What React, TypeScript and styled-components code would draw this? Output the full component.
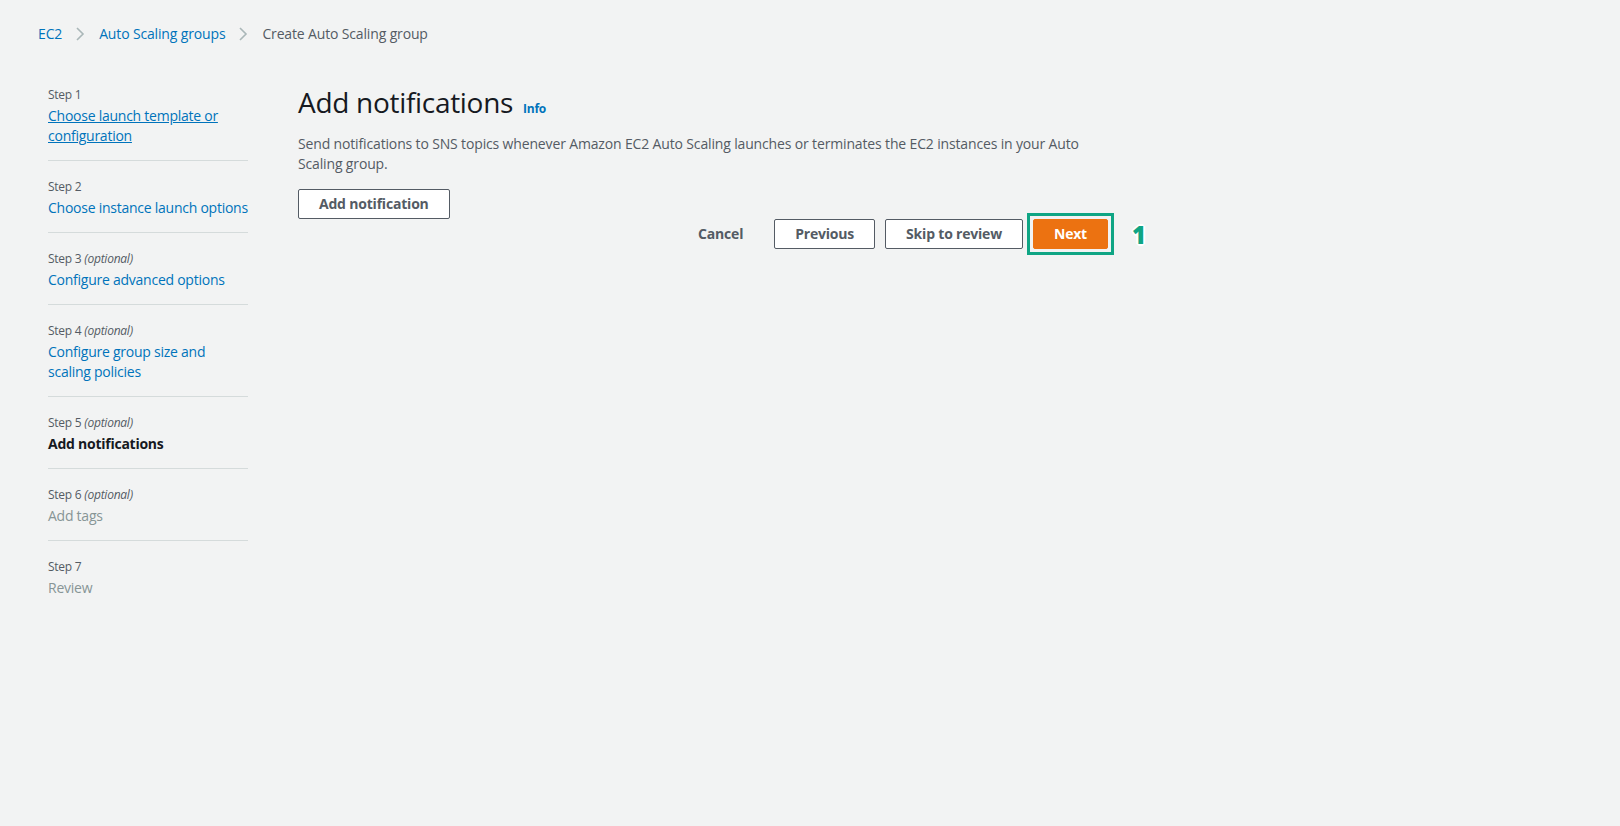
import React from "react";
import styled, { createGlobalStyle } from "styled-components";

const Global = createGlobalStyle`
  html, body { margin: 0; padding: 0; background: #f2f3f3; }
  body { font-family: "Open Sans", "Noto Sans", Arial, sans-serif; color: #16191f; letter-spacing: -0.25px; }
  * { box-sizing: border-box; }
`;

const Page = styled.div`
  min-height: 826px;
  background: #f2f3f3;
  padding-top: 23px;
`;

const Breadcrumbs = styled.nav`
  display: flex;
  align-items: center;
  padding-left: 38px;
  height: 22px;
  font-size: 14px;
  line-height: 22px;
  letter-spacing: -0.15px;
`;

const Crumb = styled.a<{ $current?: boolean }>`
  color: ${(p) => (p.$current ? "#545b64" : "#0073bb")};
  text-decoration: none;
`;

const Sep = styled.span`
  display: inline-flex;
  align-items: center;
  margin: 0 14px 0 13px;
`;

const Layout = styled.div`
  display: grid;
  grid-template-columns: 200px 810px;
  column-gap: 50px;
  padding-left: 48px;
  margin-top: 24px;
  align-items: start;
`;

const StepList = styled.ol`
  list-style: none;
  margin: 0;
  padding: 0;
`;

const StepItem = styled.li`
  padding: 15px 0 14px;
  border-bottom: 1px solid #d5dbdb;
  &:last-child { border-bottom: none; }
`;

const StepLabel = styled.div`
  font-size: 12px;
  line-height: 22px;
  color: #545b64;
  i { font-style: italic; }
`;

const StepTitle = styled.a<{ $state: "link" | "visited" | "current" | "disabled" }>`
  display: block;
  font-size: 14px;
  line-height: 20px;
  text-decoration: ${(p) => (p.$state === "visited" ? "underline" : "none")};
  color: ${(p) =>
    p.$state === "current" ? "#16191f" : p.$state === "disabled" ? "#879596" : "#0073bb"};
  font-weight: ${(p) => (p.$state === "current" ? 700 : 400)};
`;

const Main = styled.main`
  padding-top: 15px;
`;

const HeadingRow = styled.div`
  display: flex;
  align-items: baseline;
  gap: 10px;
`;

const Heading = styled.h1`
  margin: 0;
  font-size: 28px;
  line-height: 36px;
  font-weight: 400;
  letter-spacing: -0.3px;
  color: #16191f;
`;

const Info = styled.a`
  font-size: 12px;
  font-weight: 700;
  color: #0073bb;
  text-decoration: none;
`;

const Description = styled.p`
  margin: 14px 0 15px;
  font-size: 14px;
  line-height: 20px;
  letter-spacing: -0.15px;
  color: #545b64;
`;

const Button = styled.button<{ $variant?: "normal" | "primary" | "link" }>`
  font-family: inherit;
  font-size: 14px;
  font-weight: 700;
  letter-spacing: -0.2px;
  line-height: 20px;
  height: 30px;
  padding: 0 20px;
  border-radius: 2px;
  cursor: pointer;
  border: 1px solid
    ${(p) => (p.$variant === "primary" ? "#ec7211" : p.$variant === "link" ? "transparent" : "#545b64")};
  background: ${(p) => (p.$variant === "primary" ? "#ec7211" : p.$variant === "link" ? "transparent" : "#ffffff")};
  color: ${(p) => (p.$variant === "primary" ? "#ffffff" : "#545b64")};
  white-space: nowrap;
`;

const Footer = styled.div`
  display: flex;
  justify-content: flex-end;
  align-items: center;
  gap: 10px;
`;

const Highlight = styled.div`
  position: relative;
  display: flex;
  outline: 3px solid #0fa584;
  outline-offset: 3px;
`;

const Marker = styled.span`
  position: absolute;
  left: calc(100% + 24px);
  top: 50%;
  transform: translateY(-50%);
  font-family: "Open Sans", Arial, sans-serif;
  font-size: 24px;
  font-weight: 800;
  color: #0fa584;
  text-shadow: -2px 0 #fff, 2px 0 #fff, 0 -2px #fff, 0 2px #fff, -1px -1px #fff, 1px 1px #fff, -1px 1px #fff, 1px -1px #fff;
`;

const Chevron = () => (
  <svg width="10" height="16" viewBox="0 0 10 16" fill="none">
    <path d="M2 2 L8 8 L2 14" stroke="#aab7b8" strokeWidth="1.6" />
  </svg>
);

type Step = {
  n: number;
  optional?: boolean;
  title: string;
  state: "link" | "visited" | "current" | "disabled";
};

const steps: Step[] = [
  { n: 1, title: "Choose launch template or configuration", state: "visited" },
  { n: 2, title: "Choose instance launch options", state: "link" },
  { n: 3, optional: true, title: "Configure advanced options", state: "link" },
  { n: 4, optional: true, title: "Configure group size and scaling policies", state: "link" },
  { n: 5, optional: true, title: "Add notifications", state: "current" },
  { n: 6, optional: true, title: "Add tags", state: "disabled" },
  { n: 7, title: "Review", state: "disabled" },
];

export default function App() {
  return (
    <Page>
      <Global />
      <Breadcrumbs>
        <Crumb href="#">EC2</Crumb>
        <Sep><Chevron /></Sep>
        <Crumb href="#">Auto Scaling groups</Crumb>
        <Sep><Chevron /></Sep>
        <Crumb $current>Create Auto Scaling group</Crumb>
      </Breadcrumbs>
      <Layout>
        <StepList>
          {steps.map((s) => (
            <StepItem key={s.n}>
              <StepLabel>
                Step {s.n}
                {s.optional && <> <i>(optional)</i></>}
              </StepLabel>
              <StepTitle $state={s.state}>{s.title}</StepTitle>
            </StepItem>
          ))}
        </StepList>
        <Main>
          <HeadingRow>
            <Heading>Add notifications</Heading>
            <Info href="#">Info</Info>
          </HeadingRow>
          <Description>
            Send notifications to SNS topics whenever Amazon EC2 Auto Scaling launches or terminates the EC2
            instances in your Auto Scaling group.
          </Description>
          <Button>Add notification</Button>
          <Footer>
            <Button $variant="link">Cancel</Button>
            <Button>Previous</Button>
            <Button>Skip to review</Button>
            <Highlight>
              <Button $variant="primary">Next</Button>
              <Marker>1</Marker>
            </Highlight>
          </Footer>
        </Main>
      </Layout>
    </Page>
  );
}
